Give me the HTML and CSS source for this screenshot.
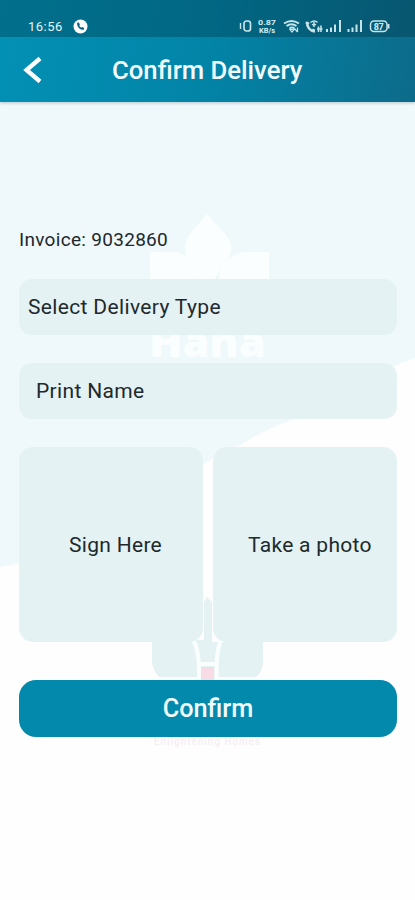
FILE: index.html
```html
<!DOCTYPE html>
<html lang="en">
<head>
  <meta charset="UTF-8">
  <meta name="viewport" content="width=device-width, initial-scale=1.0">
  <title>Confirm Delivery</title>
  <link rel="stylesheet" href="styles.css">
</head>
<body>
  <div class="top">
    <div class="status-bar">
      <div class="status-left">
        <span class="time">16:56</span>
        <svg width="15" height="15" viewBox="0 0 15 15">
          <circle cx="7.5" cy="7.5" r="7" fill="#fff"/>
          <path d="M4.2 3.8c-.7 3.8 2.6 7.4 6.5 7l.6-1.7-2-1.2-1.1.8-2-2 .7-1.2-1.1-2z" fill="#08647f"/>
        </svg>
      </div>
      <svg class="status-icons" width="154" height="18" viewBox="0 0 154 18" fill="none" stroke="#c5e3e8">
        <!-- vibrate -->
        <rect x="5" y="4" width="6.5" height="10" rx="2.5" stroke-width="1.7"/>
        <path d="M1.5 6v6" stroke-width="1.4"/>
        <!-- network speed -->
        <g class="speed">
          <text x="19" y="8" textLength="18" lengthAdjust="spacingAndGlyphs">0.87</text>
          <text x="20" y="15.5" textLength="16" lengthAdjust="spacingAndGlyphs">KB/s</text>
        </g>
        <!-- wifi -->
        <path d="M45 6.5q7.5-5 15 0M47.5 9q5-3.500 10 0M50.5 11.5q2.500-1.800 5 0" stroke-width="2"/>
        <path d="M51 12.500h4l-2 2.500zM55.500 11.500l3 3.500M58.500 10.500v4.500" stroke-width="1.200"/>
        <!-- wifi calling -->
        <path d="M68 5c0 5 3 9 8 9.500M67 5.500l3 1.500M74 14.500l1-2.500" stroke-width="2.700"/>
        <path d="M71.500 5.500q4-3 7 0M73 8q2-1.500 4 0M75 5v5" stroke-width="1.500"/>
        <path d="M79.500 9.500v5.500M82 8.500v6.500M78 12h5.500" stroke-width="1.600"/>
        <!-- signal -->
        <path d="M88 12v3M92 10.500v4.500M96 7.500v7.500M101 3v12" stroke-width="2"/>
        <path d="M109.500 12v3M113.500 10.500v4.500M117.500 7.500v7.500M122 3v12" stroke-width="2"/>
        <!-- battery -->
        <rect x="131.500" y="4" width="16.500" height="10.500" rx="3.500" stroke-width="1.500"/>
        <path d="M149.500 7v4.500" stroke-width="2"/>
        <text class="charge" x="134.700" y="12.500" textLength="10">87</text>
      </svg>
    </div>
    <header class="header">
      <svg class="back" width="20" height="28" viewBox="0 0 20 28">
        <path d="M18 2.5L4.500 14L18 25.500" fill="none" stroke="#fff" stroke-width="4.300"/>
      </svg>
      <h1>Confirm Delivery</h1>
    </header>
  </div>

  <svg class="backdrop" width="415" height="798" viewBox="0 102 415 798">
    <path d="M0 102H415V358Q394 364 370 382C330 411 282 418 240 445C170 475 90 555 0 567Z" fill="#eff8fb"/>
    <!-- logo mark -->
    <g fill="#fbfeff">
      <path d="M207 214C196 228 185 235 185 248C185 260 195 268 199 279H215C220 268 231 260 231 248C231 235 218 228 207 214Z"/>
      <path d="M150 252H176Q198 257 199 285H150ZM269 252H243Q219 257 218 285H269Z"/>
    </g>
    <text class="logo-name" x="149" y="357" textLength="117" lengthAdjust="spacingAndGlyphs">Hana</text>
    <!-- lower emblem -->
    <path d="M204 602L207 597L212 602V642H263V660Q263 672 256 677H159Q152 670 152 660V640H204Z" fill="#e4f2f4"/>
    <path d="M192 638Q200 649 199 680H217Q215 652 222 638" fill="none" stroke="#fbfeff" stroke-width="4"/>
    <path d="M199 662H216V666H199Z" fill="#fbfeff"/>
    <path d="M201 667H214V680H201Z" fill="#f8dce5"/>
    <text class="tagline" x="154" y="745" textLength="106">Enlightening Homes</text>
  </svg>

  <main class="form">
    <p class="invoice">Invoice: 9032860</p>
    <div class="field select">Select Delivery Type</div>
    <div class="field name">Print Name</div>
    <div class="tiles">
      <div class="tile">Sign Here</div>
      <div class="tile photo">Take a photo</div>
    </div>
    <button class="confirm">Confirm</button>
  </main>
</body>
</html>
```
FILE: styles.css
```css
* {
  box-sizing: border-box;
}

body {
  margin: 0;
  height: 900px;
  overflow: hidden;
  position: relative;
  background-color: #fefefe;
  font-family: Roboto, sans-serif;
  color: #20292c;
}

.top {
  height: 102px;
  position: relative;
  z-index: 1;
  background: linear-gradient(100deg, #0291b5 0%, #0284a7 50%, #0d6b8a 100%);
  box-shadow: 0 1px 3px rgba(0, 50, 70, 0.25);
}

.status-bar {
  height: 37px;
  padding: 14px 22px 0 28px;
  display: flex;
  justify-content: space-between;
  background-color: rgba(0, 35, 50, 0.3);
}

.status-left {
  display: flex;
  gap: 9px;
  height: 24px;
  align-items: center;
}

.time {
  width: 36px;
  font-size: 13px;
  letter-spacing: 0.5px;
  color: #e5f4f6;
}

.status-icons {
  margin-top: 3px;
}

.status-icons text {
  fill: #d5edf0;
  stroke: none;
  font-size: 8px;
  font-weight: bold;
}

.status-icons .charge {
  font-size: 9px;
}

.header {
  height: 65px;
  display: flex;
  align-items: center;
  padding-left: 22px;
}

.header h1 {
  margin: 0 0 0 70px;
  font-size: 25.7px;
  font-weight: 500;
  color: #f2fcff;
}

/* sits behind the form */
.backdrop {
  position: absolute;
  top: 102px;
  left: 0;
}

.logo-name {
  font-family: "Open Sans", sans-serif;
  font-size: 41px;
  font-weight: 800;
  fill: #fbfeff;
}

.tagline {
  font-size: 10px;
  font-weight: 500;
  fill: #f5eef3;
}

.form {
  position: relative;
  padding: 126px 18px 0 19px;
}

.invoice {
  margin: 0 0 28px;
  height: 23px;
  line-height: 23px;
  font-size: 19px;
  letter-spacing: 0.3px;
}

.field {
  height: 56px;
  line-height: 56px;
  margin-bottom: 28px;
  border-radius: 13px;
  background-color: #e4f2f4;
  font-size: 21px;
  letter-spacing: 0.35px;
}

.select {
  padding-left: 9px;
}

.name {
  padding-left: 17px;
}

.tiles {
  display: grid;
  grid-template-columns: 184px 184px;
  justify-content: space-between;
  margin-bottom: 38px;
}

.tile {
  height: 195px;
  padding-left: 50px;
  display: flex;
  align-items: center;
  border-radius: 14px;
  background-color: #e4f2f4;
  font-size: 21px;
  letter-spacing: 0.3px;
}

.photo {
  padding-left: 35px;
}

.confirm {
  display: block;
  width: 100%;
  height: 57px;
  border: none;
  border-radius: 17px;
  background-color: #0289ac;
  color: #f2fcff;
  font-family: inherit;
  font-size: 25.3px;
  font-weight: 500;
}
```
